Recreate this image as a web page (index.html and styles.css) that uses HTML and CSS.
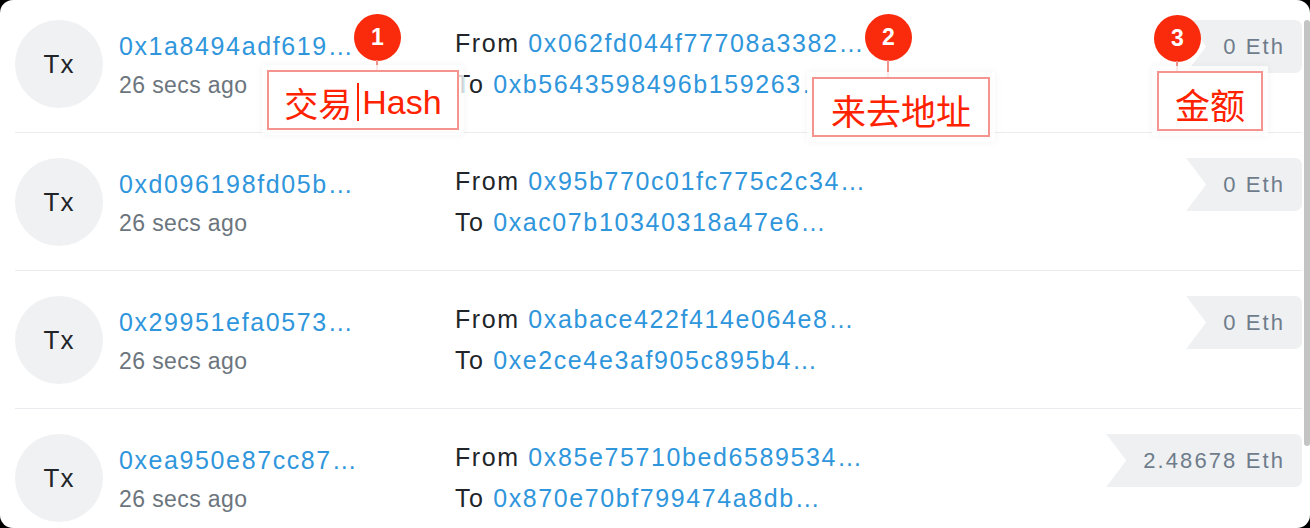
FILE: index.html
```html
<!DOCTYPE html>
<html lang="zh">
<head>
<meta charset="utf-8">
<title>Transactions</title>
<link rel="stylesheet" href="styles.css">
</head>
<body>
<div class="panel">
  <div class="list">
    <div class="row">
      <div class="avatar">Tx</div>
      <div class="hash-col">
        <a class="link">0x1a8494adf619…</a>
        <div class="ago">26 secs ago</div>
      </div>
      <div class="addr-col">
        <div class="line">From <a class="link">0x062fd044f77708a3382…</a></div>
        <div class="line">To <a class="link">0xb5643598496b159263…</a></div>
      </div>
      <div class="amount">0 Eth</div>
    </div>
    <div class="row">
      <div class="avatar">Tx</div>
      <div class="hash-col">
        <a class="link">0xd096198fd05b…</a>
        <div class="ago">26 secs ago</div>
      </div>
      <div class="addr-col">
        <div class="line">From <a class="link">0x95b770c01fc775c2c34…</a></div>
        <div class="line">To <a class="link">0xac07b10340318a47e6…</a></div>
      </div>
      <div class="amount">0 Eth</div>
    </div>
    <div class="row">
      <div class="avatar">Tx</div>
      <div class="hash-col">
        <a class="link">0x29951efa0573…</a>
        <div class="ago">26 secs ago</div>
      </div>
      <div class="addr-col">
        <div class="line">From <a class="link">0xabace422f414e064e8…</a></div>
        <div class="line">To <a class="link">0xe2ce4e3af905c895b4…</a></div>
      </div>
      <div class="amount">0 Eth</div>
    </div>
    <div class="row">
      <div class="avatar">Tx</div>
      <div class="hash-col">
        <a class="link">0xea950e87cc87…</a>
        <div class="ago">26 secs ago</div>
      </div>
      <div class="addr-col">
        <div class="line">From <a class="link">0x85e75710bed6589534…</a></div>
        <div class="line">To <a class="link">0x870e70bf799474a8db…</a></div>
      </div>
      <div class="amount">2.48678 Eth</div>
    </div>
  </div>

  <div class="scrollbar"></div>

  <div class="marker m1">1</div>
  <div class="leader l1"></div>
  <div class="note n1">交易<span class="caret"></span>Hash</div>

  <div class="marker m2">2</div>
  <div class="leader l2"></div>
  <div class="note n2">来去地址</div>

  <div class="marker m3">3</div>
  <div class="leader l3"></div>
  <div class="note n3">金额</div>
</div>
</body>
</html>
```
FILE: styles.css
```css
* { box-sizing: border-box; }
html, body { margin: 0; padding: 0; }
body {
  background: #000;
  width: 1310px;
  height: 528px;
  overflow: hidden;
  font-family: "Liberation Sans", "Noto Sans CJK SC", sans-serif;
}
.panel {
  position: relative;
  width: 1310px;
  height: 528px;
  background: #fff;
  border-radius: 13px;
  overflow: hidden;
}
.list {
  margin-top: -5px;
  padding: 0 8px 0 15px;
}
.row {
  display: flex;
  align-items: flex-start;
  height: 138px;
  border-bottom: 1px solid #ebebf0;
}
.avatar {
  flex: none;
  width: 88px;
  height: 88px;
  margin-top: 25px;
  border-radius: 50%;
  background: #f0f1f3;
  color: #212529;
  font-size: 26px;
  letter-spacing: 1px;
  display: flex;
  align-items: center;
  justify-content: center;
}
.hash-col {
  width: 336px;
  margin-left: 16px;
  margin-top: 35px;
  display: flex;
  flex-direction: column;
  gap: 7px;
}
.link {
  color: #2f96dc;
  text-decoration: none;
}
.hash-col .link {
  font-size: 25px;
  letter-spacing: 1.6px;
  line-height: 32px;
}
.ago {
  color: #6c757d;
  font-size: 23px;
  letter-spacing: 0.4px;
  line-height: 32px;
}
.addr-col {
  margin-top: 32px;
  display: flex;
  flex-direction: column;
  gap: 9px;
  flex: 1;
}
.line {
  color: #212529;
  font-size: 25px;
  letter-spacing: 1.6px;
  line-height: 32px;
}
.amount {
  flex: none;
  margin-top: 25px;
  height: 53px;
  padding: 0 17px 0 37px;
  display: flex;
  align-items: center;
  background: #eff0f2;
  color: #6e7c8b;
  font-size: 22px;
  letter-spacing: 2.1px;
  border-radius: 0 7px 7px 0;
  clip-path: polygon(0 0, 100% 0, 100% 100%, 0 100%, 20px 50%);
}
.scrollbar {
  position: absolute;
  right: 0;
  top: 20px;
  width: 6px;
  height: 426px;
  border-radius: 3px;
  background: #c4c4c4;
}
.marker {
  position: absolute;
  width: 47px;
  height: 47px;
  border-radius: 50%;
  background: #fa2a0c;
  color: #fff;
  font-family: "Liberation Sans", sans-serif;
  font-size: 23px;
  font-weight: bold;
  display: flex;
  align-items: center;
  justify-content: center;
}
.m1 { left: 354px; top: 14px; }
.m2 { left: 865px; top: 14px; }
.m3 { left: 1154px; top: 15px; }
.leader {
  position: absolute;
  width: 2px;
  background: #f39089;
}
.l1 { left: 376px; top: 60px; height: 11px; }
.l2 { left: 887px; top: 60px; height: 18px; }
.l3 { left: 1176px; top: 61px; height: 11px; }
.note {
  position: absolute;
  height: 60px;
  border: 2px solid #f5938e;
  background: #fff;
  box-shadow: 0 0 0 5px rgba(255,255,255,0.8), 0 0 8px 5px rgba(0,0,0,0.05);
  color: #ff2200;
  font-family: "Liberation Sans", "Noto Sans CJK SC", sans-serif;
  font-size: 34px;
  display: flex;
  align-items: center;
  justify-content: center;
  padding-top: 4px;
}
.n1 { left: 267px; top: 70px; width: 192px; }
.n2 { left: 812px; top: 77px; width: 178px; font-size: 35px; }
.n3 { left: 1157px; top: 71px; width: 106px; font-size: 35px; }
.caret {
  display: inline-block;
  width: 2px;
  height: 38px;
  background: #ff2200;
  margin: 0 3px 0 5px;
}
```
